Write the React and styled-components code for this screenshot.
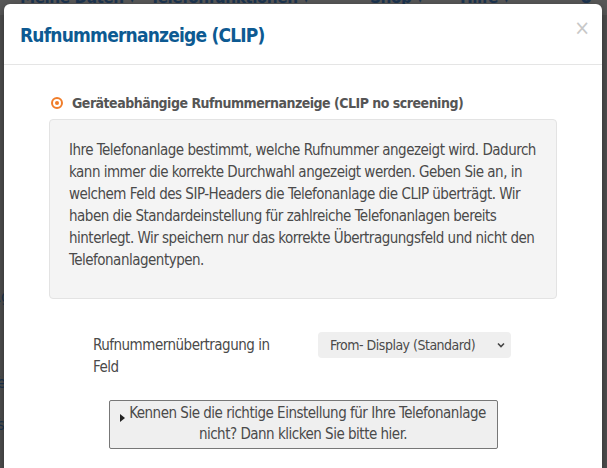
import React from 'react'
import styled, { createGlobalStyle } from 'styled-components'

const Global = createGlobalStyle`
  html, body { margin: 0; padding: 0; }
  body {
    background: #4f4f4f;
    font-family: "DejaVu Sans Condensed", "Open Sans", sans-serif;
    overflow: hidden;
  }
`

const Page = styled.div`
  position: relative;
  width: 607px;
  height: 468px;
  overflow: hidden;
  background: #4f4f4f;
`

const Nav = styled.ul`
  display: grid;
  grid-template-columns: 130px 220px 90px 120px 40px;
  margin: -13px 0 0 0;
  padding: 0 0 0 20px;
  height: 28px;
  list-style: none;
  background: #585858;
  li {
    font-size: 17px;
    font-weight: bold;
    letter-spacing: -0.5px;
    color: #1d3550;
    white-space: nowrap;
  }
`

const Behind = styled.div`
  color: #1d3550;
  font-size: 16px;
  line-height: 18px;
  margin-left: -9px;
  p { margin: 0; }
`

const Modal = styled.div`
  position: absolute;
  top: 4px;
  left: 4px;
  width: 598px;
  height: 500px;
  background: #fff;
  border-radius: 6px;
  box-shadow: 0 3px 9px rgba(0, 0, 0, 0.4);
`

const Header = styled.div`
  display: flex;
  justify-content: space-between;
  align-items: center;
  height: 60px;
  padding: 0 16px;
  border-bottom: 1px solid #e5e5e5;
`

const Title = styled.h4`
  margin: 2px 0 0 0;
  font-size: 19px;
  font-weight: bold;
  letter-spacing: -0.8px;
  color: #0d5a92;
`

const Close = styled.span`
  color: #c8c8c8;
  font-size: 21px;
  margin: -13px -4px 0 0;
`

const Body = styled.div`
  padding: 30px 45px 0 45px;
`

const RadioRow = styled.label`
  display: flex;
  align-items: center;
  gap: 9px;
  font-size: 14px;
  font-weight: bold;
  letter-spacing: -0.5px;
  color: #555;
  margin-left: 2px;
`

const Radio = styled.span`
  width: 8px;
  height: 8px;
  border: 2px solid #f07d2a;
  border-radius: 50%;
  display: flex;
  align-items: center;
  justify-content: center;
  &::after {
    content: '';
    width: 4px;
    height: 4px;
    border-radius: 50%;
    background: #f07d2a;
  }
`

const InfoBox = styled.div`
  margin-top: 8px;
  background: #f4f4f4;
  border: 1px solid #e3e3e3;
  border-radius: 4px;
  padding: 19px 19px 27px 19px;
  font-size: 15px;
  line-height: 22px;
  letter-spacing: -0.5px;
  color: #4a4a4a;
  min-height: 130px;
`

const FieldRow = styled.div`
  display: grid;
  grid-template-columns: 225px 193px;
  margin-top: 33px;
  margin-left: 44px;
`

const FieldLabel = styled.span`
  font-size: 15px;
  line-height: 22px;
  letter-spacing: -0.5px;
  color: #4a4a4a;
  padding-top: 2px;
  width: 190px;
`

const Select = styled.div`
  height: 26px;
  background: #efefef;
  border-radius: 4px;
  display: flex;
  align-items: center;
  justify-content: space-between;
  padding: 0 5px 0 12px;
  font-size: 14px;
  letter-spacing: -0.5px;
  color: #4a4a4a;
  svg { width: 10px; height: 10px; }
`

const HelpButton = styled.button`
  display: block;
  margin: 22px 0 0 60px;
  width: 389px;
  padding: 2px 3px 3px 2px;
  background: #efefef;
  border: 1px solid #777;
  border-radius: 2px;
  font-family: inherit;
  font-size: 15px;
  line-height: 21px;
  letter-spacing: -0.5px;
  color: #4a4a4a;
  text-align: center;
`

const Arrow = styled.span`
  display: inline-block;
  width: 0;
  height: 0;
  border-top: 4px solid transparent;
  border-bottom: 4px solid transparent;
  border-left: 5px solid #222;
  margin-right: 4px;
  vertical-align: -4px;
`

export default function App() {
  return (
    <Page>
      <Global />
      <Nav>
        <li>Meine Daten ▾</li>
        <li>Telefonfunktionen ▾</li>
        <li>Shop ▾</li>
        <li>Hilfe ▾</li>
        <li>Ü</li>
      </Nav>
      <Behind>
        <p style={{ marginTop: 273 }}>Rg</p>
        <p style={{ marginTop: 68 }}>Te</p>
        <p style={{ marginTop: 24 }}>Ts</p>
      </Behind>
      <Modal>
        <Header>
          <Title>Rufnummernanzeige (CLIP)</Title>
          <Close>×</Close>
        </Header>
        <Body>
          <RadioRow>
            <Radio />
            Geräteabhängige Rufnummernanzeige (CLIP no screening)
          </RadioRow>
          <InfoBox>
            Ihre Telefonanlage bestimmt, welche Rufnummer angezeigt wird. Dadurch kann immer die
            korrekte Durchwahl angezeigt werden. Geben Sie an, in welchem Feld des SIP-Headers die
            Telefonanlage die CLIP überträgt. Wir haben die Standardeinstellung für zahlreiche
            Telefonanlagen bereits hinterlegt. Wir speichern nur das korrekte Übertragungsfeld und
            nicht den Telefonanlagentypen.
          </InfoBox>
          <FieldRow>
            <FieldLabel>Rufnummernübertragung in Feld</FieldLabel>
            <Select>
              From- Display (Standard)
              <svg viewBox="0 0 10 10">
                <path d="M2 3.5 L5 6.5 L8 3.5" fill="none" stroke="#444" strokeWidth="1.6" />
              </svg>
            </Select>
          </FieldRow>
          <HelpButton>
            <Arrow />
            Kennen Sie die richtige Einstellung für Ihre Telefonanlage nicht? Dann klicken Sie bitte hier.
          </HelpButton>
        </Body>
      </Modal>
    </Page>
  )
}
